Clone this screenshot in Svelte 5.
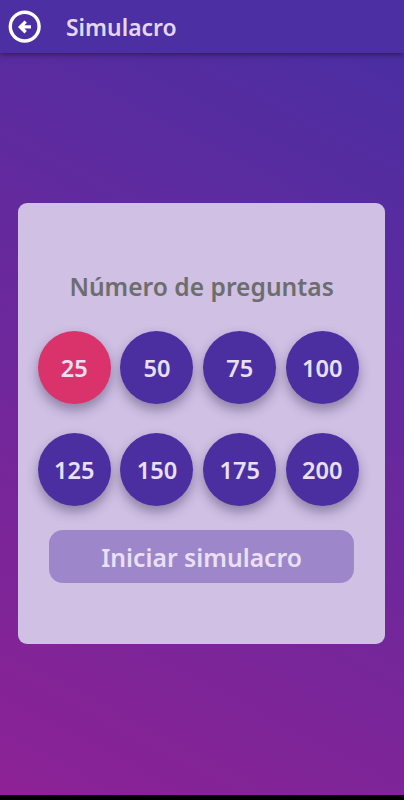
<script lang="ts">
    const options = [25, 50, 75, 100, 125, 150, 175, 200];

    let selected = $state(25);

    function select(n: number){
        selected = n;
    }
</script>

<div class="screen">
    <header>
        <button class="back" aria-label="Volver">
            <svg viewBox="0 0 34 34" width="34" height="34">
                <circle cx="16.7" cy="16.6" r="14.4" />
                <path d="M23 16.9H12.6M17.7 11.6L12.4 16.9L17.7 22.2" />
            </svg>
        </button>
        <h1>Simulacro</h1>
    </header>

    <main>
        <section class="card">
            <h2>Número de preguntas</h2>
            <div class="options">
                {#each options as n}
                    <button class="option" class:active={n === selected} onclick={() => select(n)}>{n}</button>
                {/each}
            </div>
            <button class="start">Iniciar simulacro</button>
        </section>
    </main>

    <div class="navbar"></div>
</div>

<style>
    :global(body){
        margin: 0;
    }

    .screen{
        display: flex;
        flex-direction: column;
        width: 404px;
        height: 800px;
        overflow: hidden;
        font-family: "Noto Sans", sans-serif;
        background: linear-gradient(208deg, #4c2ea2 0%, #4c2ea2 7%, #8d2295 100%);
    }

    button{
        border: 0;
        padding: 0;
        font-family: inherit;
        font-weight: 600;
        color: #e9e0f5;
        cursor: pointer;
    }

    header{
        display: flex;
        align-items: center;
        flex: none;
        box-sizing: border-box;
        height: 53px;
        padding-left: 8px;
        background-color: #4c2fa2;
        box-shadow: 0 1px 6px rgba(0, 0, 0, 0.5);
    }

    .back{
        display: flex;
        background: none;
    }

    .back svg{
        fill: none;
        stroke: #fff;
        stroke-width: 3.4;
    }

    h1{
        margin: 0 0 0 24px;
        padding-top: 2px;
        font-size: 22.9px;
        font-weight: 600;
        line-height: 32px;
        color: #e2d8f4;
    }

    main{
        flex: 1;
        padding: 150.4px 19.2px 0 18.4px;
    }

    .card{
        display: flex;
        flex-direction: column;
        align-items: center;
        box-sizing: border-box;
        height: 441px;
        padding-top: 67px;
        border-radius: 9px;
        background-color: #cfc0e4;
    }

    h2{
        margin: 0;
        font-size: 24.6px;
        font-weight: 600;
        line-height: 34px;
        color: #6d6d6d;
    }

    .options{
        display: grid;
        grid-template-columns: repeat(4, 73px);
        gap: 28.7px 9.7px;
        margin: 27px 6.6px 0 0;
    }

    .option{
        height: 73px;
        border-radius: 50%;
        font-size: 23.6px;
        background-color: #4b2fa1;
        box-shadow: 0 6px 12px rgba(40, 30, 70, 0.4);
    }

    .option.active{
        background-color: #da336c;
    }

    .start{
        width: 305px;
        height: 53px;
        margin-top: 24px;
        padding-top: 1px;
        border-radius: 14px;
        font-size: 24.7px;
        background-color: #9d86c9;
    }

    .navbar{
        flex: none;
        height: 5px;
        background-color: #000;
    }
</style>
